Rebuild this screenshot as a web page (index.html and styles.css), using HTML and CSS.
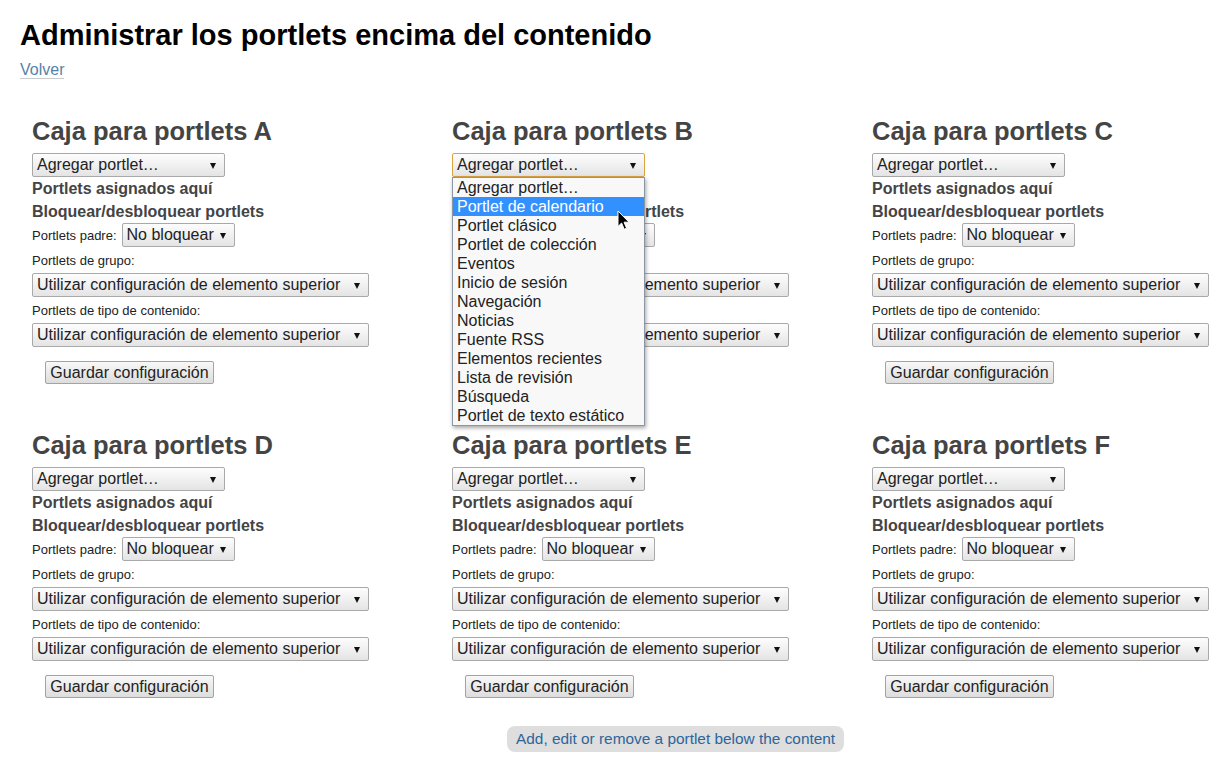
FILE: index.html
```html
<!DOCTYPE html>
<html lang="es">
<head>
<meta charset="utf-8">
<title>Administrar los portlets encima del contenido</title>
<link rel="stylesheet" href="styles.css">
</head>
<body>
<h1 class="title">Administrar los portlets encima del contenido</h1>
<p class="back"><a href="#" class="back-link">Volver</a></p>

<div class="grid">
  <div class="box">
    <h2 class="box-title">Caja para portlets A</h2>
    <div class="sel-wrap"><span class="sel sel-add">Agregar portlet…<i class="arrow"></i></span></div>
    <div class="strong">Portlets asignados aquí</div>
    <div class="strong">Bloquear/desbloquear portlets</div>
    <div class="row"><span class="small">Portlets padre:</span><span class="sel sel-lock">No bloquear<i class="arrow"></i></span></div>
    <div class="small label">Portlets de grupo:</div>
    <span class="sel sel-wide">Utilizar configuración de elemento superior<i class="arrow"></i></span>
    <div class="small label">Portlets de tipo de contenido:</div>
    <span class="sel sel-wide">Utilizar configuración de elemento superior<i class="arrow"></i></span>
    <div class="btn-row"><span class="btn">Guardar configuración</span></div>
  </div>

  <div class="box">
    <h2 class="box-title">Caja para portlets B</h2>
    <div class="sel-wrap">
      <span class="sel sel-add sel-focus">Agregar portlet…<i class="arrow"></i></span>
      <ul class="dropdown">
        <li class="opt">Agregar portlet…</li>
        <li class="opt opt-active">Portlet de calendario</li>
        <li class="opt">Portlet clásico</li>
        <li class="opt">Portlet de colección</li>
        <li class="opt">Eventos</li>
        <li class="opt">Inicio de sesión</li>
        <li class="opt">Navegación</li>
        <li class="opt">Noticias</li>
        <li class="opt">Fuente RSS</li>
        <li class="opt">Elementos recientes</li>
        <li class="opt">Lista de revisión</li>
        <li class="opt">Búsqueda</li>
        <li class="opt">Portlet de texto estático</li>
        <svg class="cursor" width="13" height="21" viewBox="0 0 13 21"><path d="M1 1 L1 16.5 L4.6 13 L7.2 19.2 L9.6 18.2 L7 12.2 L12 12.2 Z" fill="#000" stroke="#fff" stroke-width="1" stroke-linejoin="round"/></svg>
      </ul>
    </div>
    <div class="strong">Portlets asignados aquí</div>
    <div class="strong">Bloquear/desbloquear portlets</div>
    <div class="row"><span class="small">Portlets padre:</span><span class="sel sel-lock">No bloquear<i class="arrow"></i></span></div>
    <div class="small label">Portlets de grupo:</div>
    <span class="sel sel-wide">Utilizar configuración de elemento superior<i class="arrow"></i></span>
    <div class="small label">Portlets de tipo de contenido:</div>
    <span class="sel sel-wide">Utilizar configuración de elemento superior<i class="arrow"></i></span>
    <div class="btn-row"><span class="btn">Guardar configuración</span></div>
  </div>

  <div class="box">
    <h2 class="box-title">Caja para portlets C</h2>
    <div class="sel-wrap"><span class="sel sel-add">Agregar portlet…<i class="arrow"></i></span></div>
    <div class="strong">Portlets asignados aquí</div>
    <div class="strong">Bloquear/desbloquear portlets</div>
    <div class="row"><span class="small">Portlets padre:</span><span class="sel sel-lock">No bloquear<i class="arrow"></i></span></div>
    <div class="small label">Portlets de grupo:</div>
    <span class="sel sel-wide">Utilizar configuración de elemento superior<i class="arrow"></i></span>
    <div class="small label">Portlets de tipo de contenido:</div>
    <span class="sel sel-wide">Utilizar configuración de elemento superior<i class="arrow"></i></span>
    <div class="btn-row"><span class="btn">Guardar configuración</span></div>
  </div>

  <div class="box">
    <h2 class="box-title">Caja para portlets D</h2>
    <div class="sel-wrap"><span class="sel sel-add">Agregar portlet…<i class="arrow"></i></span></div>
    <div class="strong">Portlets asignados aquí</div>
    <div class="strong">Bloquear/desbloquear portlets</div>
    <div class="row"><span class="small">Portlets padre:</span><span class="sel sel-lock">No bloquear<i class="arrow"></i></span></div>
    <div class="small label">Portlets de grupo:</div>
    <span class="sel sel-wide">Utilizar configuración de elemento superior<i class="arrow"></i></span>
    <div class="small label">Portlets de tipo de contenido:</div>
    <span class="sel sel-wide">Utilizar configuración de elemento superior<i class="arrow"></i></span>
    <div class="btn-row"><span class="btn">Guardar configuración</span></div>
  </div>

  <div class="box">
    <h2 class="box-title">Caja para portlets E</h2>
    <div class="sel-wrap"><span class="sel sel-add">Agregar portlet…<i class="arrow"></i></span></div>
    <div class="strong">Portlets asignados aquí</div>
    <div class="strong">Bloquear/desbloquear portlets</div>
    <div class="row"><span class="small">Portlets padre:</span><span class="sel sel-lock">No bloquear<i class="arrow"></i></span></div>
    <div class="small label">Portlets de grupo:</div>
    <span class="sel sel-wide">Utilizar configuración de elemento superior<i class="arrow"></i></span>
    <div class="small label">Portlets de tipo de contenido:</div>
    <span class="sel sel-wide">Utilizar configuración de elemento superior<i class="arrow"></i></span>
    <div class="btn-row"><span class="btn">Guardar configuración</span></div>
  </div>

  <div class="box">
    <h2 class="box-title">Caja para portlets F</h2>
    <div class="sel-wrap"><span class="sel sel-add">Agregar portlet…<i class="arrow"></i></span></div>
    <div class="strong">Portlets asignados aquí</div>
    <div class="strong">Bloquear/desbloquear portlets</div>
    <div class="row"><span class="small">Portlets padre:</span><span class="sel sel-lock">No bloquear<i class="arrow"></i></span></div>
    <div class="small label">Portlets de grupo:</div>
    <span class="sel sel-wide">Utilizar configuración de elemento superior<i class="arrow"></i></span>
    <div class="small label">Portlets de tipo de contenido:</div>
    <span class="sel sel-wide">Utilizar configuración de elemento superior<i class="arrow"></i></span>
    <div class="btn-row"><span class="btn">Guardar configuración</span></div>
  </div>
</div>

<div class="footer"><a href="#" class="pill">Add, edit or remove a portlet below the content</a></div>
</body>
</html>
```

FILE: styles.css
```css
html, body {
  margin: 0;
  padding: 0;
  background: #fff;
}
body {
  font-family: "Liberation Sans", Arial, sans-serif;
  color: #222;
  padding: 0 20px;
  overflow: hidden;
}
.title {
  margin: 17px 0 0;
  font-size: 29px;
  line-height: 36px;
  font-weight: bold;
  color: #000;
}
.back {
  margin: 7px 0 0;
  font-size: 16px;
  line-height: 20px;
}
.back-link {
  color: #5582aa;
  text-decoration: none;
  border-bottom: 1px solid #c8ccd0;
}
.grid {
  margin-top: 36px;
  padding-left: 12px;
  display: grid;
  grid-template-columns: 420px 420px 1fr;
  row-gap: 46px;
}
.box {
  display: flex;
  flex-direction: column;
  align-items: flex-start;
}
.box-title {
  margin: 0 0 7px;
  font-size: 25.5px;
  line-height: 30px;
  font-weight: bold;
  color: #444;
  white-space: nowrap;
}
.sel-wrap {
  position: relative;
}
.sel {
  box-sizing: border-box;
  height: 24px;
  display: inline-flex;
  align-items: center;
  justify-content: space-between;
  padding: 0 8px 0 4px;
  border: 1px solid #a9a9a9;
  border-radius: 2px;
  background: linear-gradient(#fdfdfd, #e4e4e4);
  font-size: 16px;
  color: #222;
  white-space: nowrap;
}
.sel-add { width: 193px; }
.sel-lock { width: 113px; }
.sel-wide { width: 337px; }
.sel-focus {
  border-color: #d9a342;
}
.arrow {
  display: inline-block;
  width: 0;
  height: 0;
  border-left: 3.5px solid transparent;
  border-right: 3.5px solid transparent;
  border-top: 6px solid #111;
  margin-left: 6px;
  margin-top: 1px;
}
.strong {
  font-size: 16px;
  line-height: 23px;
  font-weight: bold;
  color: #444;
}
.row {
  display: flex;
  align-items: center;
  gap: 5px;
  height: 24px;
}
.small {
  font-size: 13px;
  color: #222;
}
.label {
  line-height: 16px;
  padding: 6px 0 4px;
}
.btn-row {
  padding-top: 14px;
  padding-left: 13px;
}
.btn {
  box-sizing: border-box;
  display: inline-flex;
  align-items: center;
  justify-content: center;
  width: 169px;
  height: 23px;
  border: 1px solid #a3a3a3;
  border-radius: 2px;
  background: linear-gradient(#f8f8f8, #dddddd);
  font-size: 16px;
  color: #222;
}
.dropdown {
  position: absolute;
  left: 0;
  top: 24px;
  width: 193px;
  box-sizing: border-box;
  margin: 0;
  padding: 0;
  list-style: none;
  border: 1px solid #8a96a3;
  background: #f8f8f8;
  box-shadow: 1px 2px 4px rgba(0, 0, 0, 0.35);
  z-index: 5;
}
.opt {
  font-size: 16px;
  line-height: 19px;
  height: 19px;
  padding-left: 4px;
  color: #222;
  white-space: nowrap;
}
.opt-active {
  background: #3391ff;
  color: #fff;
}
.cursor {
  position: absolute;
  left: 164px;
  top: 32px;
}
.footer {
  margin-top: 28px;
  padding-left: 487px;
}
.pill {
  display: inline-block;
  height: 26px;
  line-height: 26px;
  padding: 0 9px;
  border-radius: 8px;
  background: #dedede;
  color: #2d659b;
  font-size: 15.4px;
  text-decoration: none;
  white-space: nowrap;
}
```
